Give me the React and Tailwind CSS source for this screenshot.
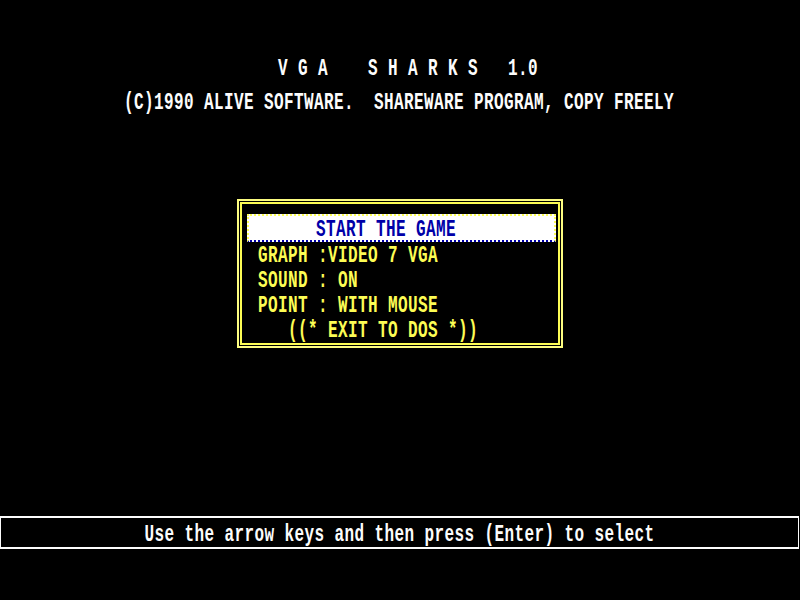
import React from 'react';

const Txt = ({ children, className = '' }) => (
  <span className={`inline-block leading-[16px] scale-y-[1.55] translate-y-[2px] whitespace-pre ${className}`}>{children}</span>
);

const menuRows = [
  'GRAPH :VIDEO 7 VGA',
  'SOUND : ON',
  'POINT : WITH MOUSE',
  '   ((* EXIT TO DOS *))',
];

const App = () => {
  return (
    <div className="w-[800px] h-[600px] bg-black flex flex-col font-['Liberation_Mono',monospace] font-bold text-[16px] tracking-[0.4px] text-[#fcfcfc]">
      <div className="mt-[55px] h-[25px] leading-[25px] pl-[278px]">
        <Txt>V G A    S H A R K S   1.0</Txt>
      </div>
      <div className="mt-[9px] h-[25px] leading-[25px] pl-[124px]">
        <Txt>(C)1990 ALIVE SOFTWARE.  SHAREWARE PROGRAM, COPY FREELY</Txt>
      </div>

      {/* menu box */}
      <div className="mt-[85px] ml-[237px] w-[326px] border-2 border-[#fcfc80] p-[1px]">
        <div className="border-2 border-[#fcfc54] pb-[1px] text-[#fcfc54]">
          <div className="mt-[10px] ml-[5px] mr-[2px] border-2 border-dotted border-[#fcfc54] border-b-[#0000a8] bg-white h-[28px] leading-[24px] pl-[67px] text-[#0000a8]">
            <Txt className="translate-y-[1px]">START THE GAME</Txt>
          </div>
          {menuRows.map((row) => (
            <div key={row} className="h-[25px] leading-[25px] pl-[16px]">
              <Txt>{row}</Txt>
            </div>
          ))}
        </div>
      </div>

      {/* status bar */}
      <div className="mt-[168px] w-[799px] h-[33px] border-x border-y-2 border-[#fcfcfc] flex items-center justify-center">
        <Txt>Use the arrow keys and then press (Enter) to select</Txt>
      </div>
    </div>
  );
};

export default App;
